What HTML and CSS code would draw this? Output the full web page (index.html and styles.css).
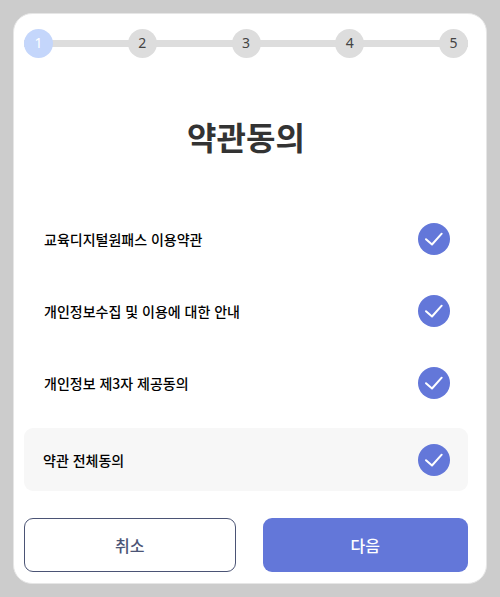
FILE: index.html
```html
<!DOCTYPE html>
<html lang="ko">
<head>
    <meta charset="UTF-8">
    <meta name="viewport" content="width=device-width, initial-scale=1.0">
    <title>약관동의</title>
    <link rel="stylesheet" href="styles.css">
</head>
<body>
    <main class="card">
        <ol class="steps">
            <li class="step active">1</li>
            <li class="step">2</li>
            <li class="step">3</li>
            <li class="step">4</li>
            <li class="step">5</li>
        </ol>

        <h1>약관동의</h1>

        <form>
            <div class="terms">
                <div class="term">
                    <label for="service">교육디지털원패스 이용약관</label>
                    <span class="check">
                        <input type="checkbox" id="service" checked>
                        <svg viewBox="0 0 32 32"><path d="M8 16.2L14 21.5L23.7 10.7"/></svg>
                    </span>
                </div>
                <div class="term">
                    <label for="privacy">개인정보수집 및 이용에 대한 안내</label>
                    <span class="check">
                        <input type="checkbox" id="privacy" checked>
                        <svg viewBox="0 0 32 32"><path d="M8 16.2L14 21.5L23.7 10.7"/></svg>
                    </span>
                </div>
                <div class="term">
                    <label for="thirdparty">개인정보 제3자 제공동의</label>
                    <span class="check">
                        <input type="checkbox" id="thirdparty" checked>
                        <svg viewBox="0 0 32 32"><path d="M8 16.2L14 21.5L23.7 10.7"/></svg>
                    </span>
                </div>
            </div>

            <!-- 전체동의 -->
            <div class="term all">
                <label for="all">약관 전체동의</label>
                <span class="check">
                    <input type="checkbox" id="all" checked>
                    <svg viewBox="0 0 32 32"><path d="M8 16.2L14 21.5L23.7 10.7"/></svg>
                </span>
            </div>

            <div class="buttons">
                <button type="button" class="cancel">취소</button>
                <button type="submit" class="next">다음</button>
            </div>
        </form>
    </main>
</body>
</html>
```
FILE: styles.css
```css
* {
    box-sizing: border-box;
}

body {
    margin: 0;
    padding: 13px;
    background-color: #ccc;
    font-family: "Noto Sans CJK KR", sans-serif;
    color: #000;
}

.card {
    padding: 15px 18px 11px 10px;
    background-color: #fff;
    border: 1px solid #e6e6e6;
    border-radius: 19px;
}

/* 진행 단계 */
.steps {
    display: flex;
    justify-content: space-between;
    margin: 0;
    padding: 0;
    list-style: none;
    background: linear-gradient(#ddd, #ddd) center / 100% 7px no-repeat;
}

.step {
    width: 29px;
    height: 29px;
    border-radius: 50%;
    background-color: #ddd;
    color: #444;
    font-family: "Noto Sans", sans-serif;
    font-size: 14px;
    line-height: 27px;
    text-align: center;
}

.step.active {
    background-color: #c4d6fb;
    color: #fff;
}

h1 {
    margin: 54px 0 43px;
    font-size: 32px;
    line-height: 48px;
    text-align: center;
    color: #333;
}

.term {
    display: flex;
    align-items: center;
    justify-content: space-between;
    height: 72px;
    padding: 0 18px 0 20px;
}

.term label {
    font-size: 14px;
    font-weight: 500;
    line-height: 20px;
}

.term.all {
    height: 63px;
    margin-top: 9px;
    padding-left: 19px;
    background-color: #f7f7f7;
    border-radius: 9px;
}

.check {
    display: grid;
}

.check input,
.check svg {
    grid-area: 1 / 1;
    width: 32px;
    height: 32px;
    margin: 0;
}

.check input {
    appearance: none;
    border-radius: 50%;
    background-color: #ddd;
    cursor: pointer;
}

.check input:checked {
    background-color: #6377d9;
}

.check svg {
    fill: none;
    stroke: #fff;
    stroke-width: 2;
    stroke-linecap: round;
    stroke-linejoin: round;
    pointer-events: none;
}

.buttons {
    display: grid;
    grid-template-columns: 34fr 33fr;
    gap: 27px;
    margin-top: 27px;
}

button {
    height: 54px;
    padding: 0;
    border: none;
    border-radius: 9px;
    font-family: inherit;
    font-size: 16px;
    font-weight: 500;
    cursor: pointer;
}

.cancel {
    background-color: #fff;
    border: 1px solid #4b5475;
    color: #4b5475;
}

.next {
    background-color: #6377d9;
    color: #fff;
}
```
